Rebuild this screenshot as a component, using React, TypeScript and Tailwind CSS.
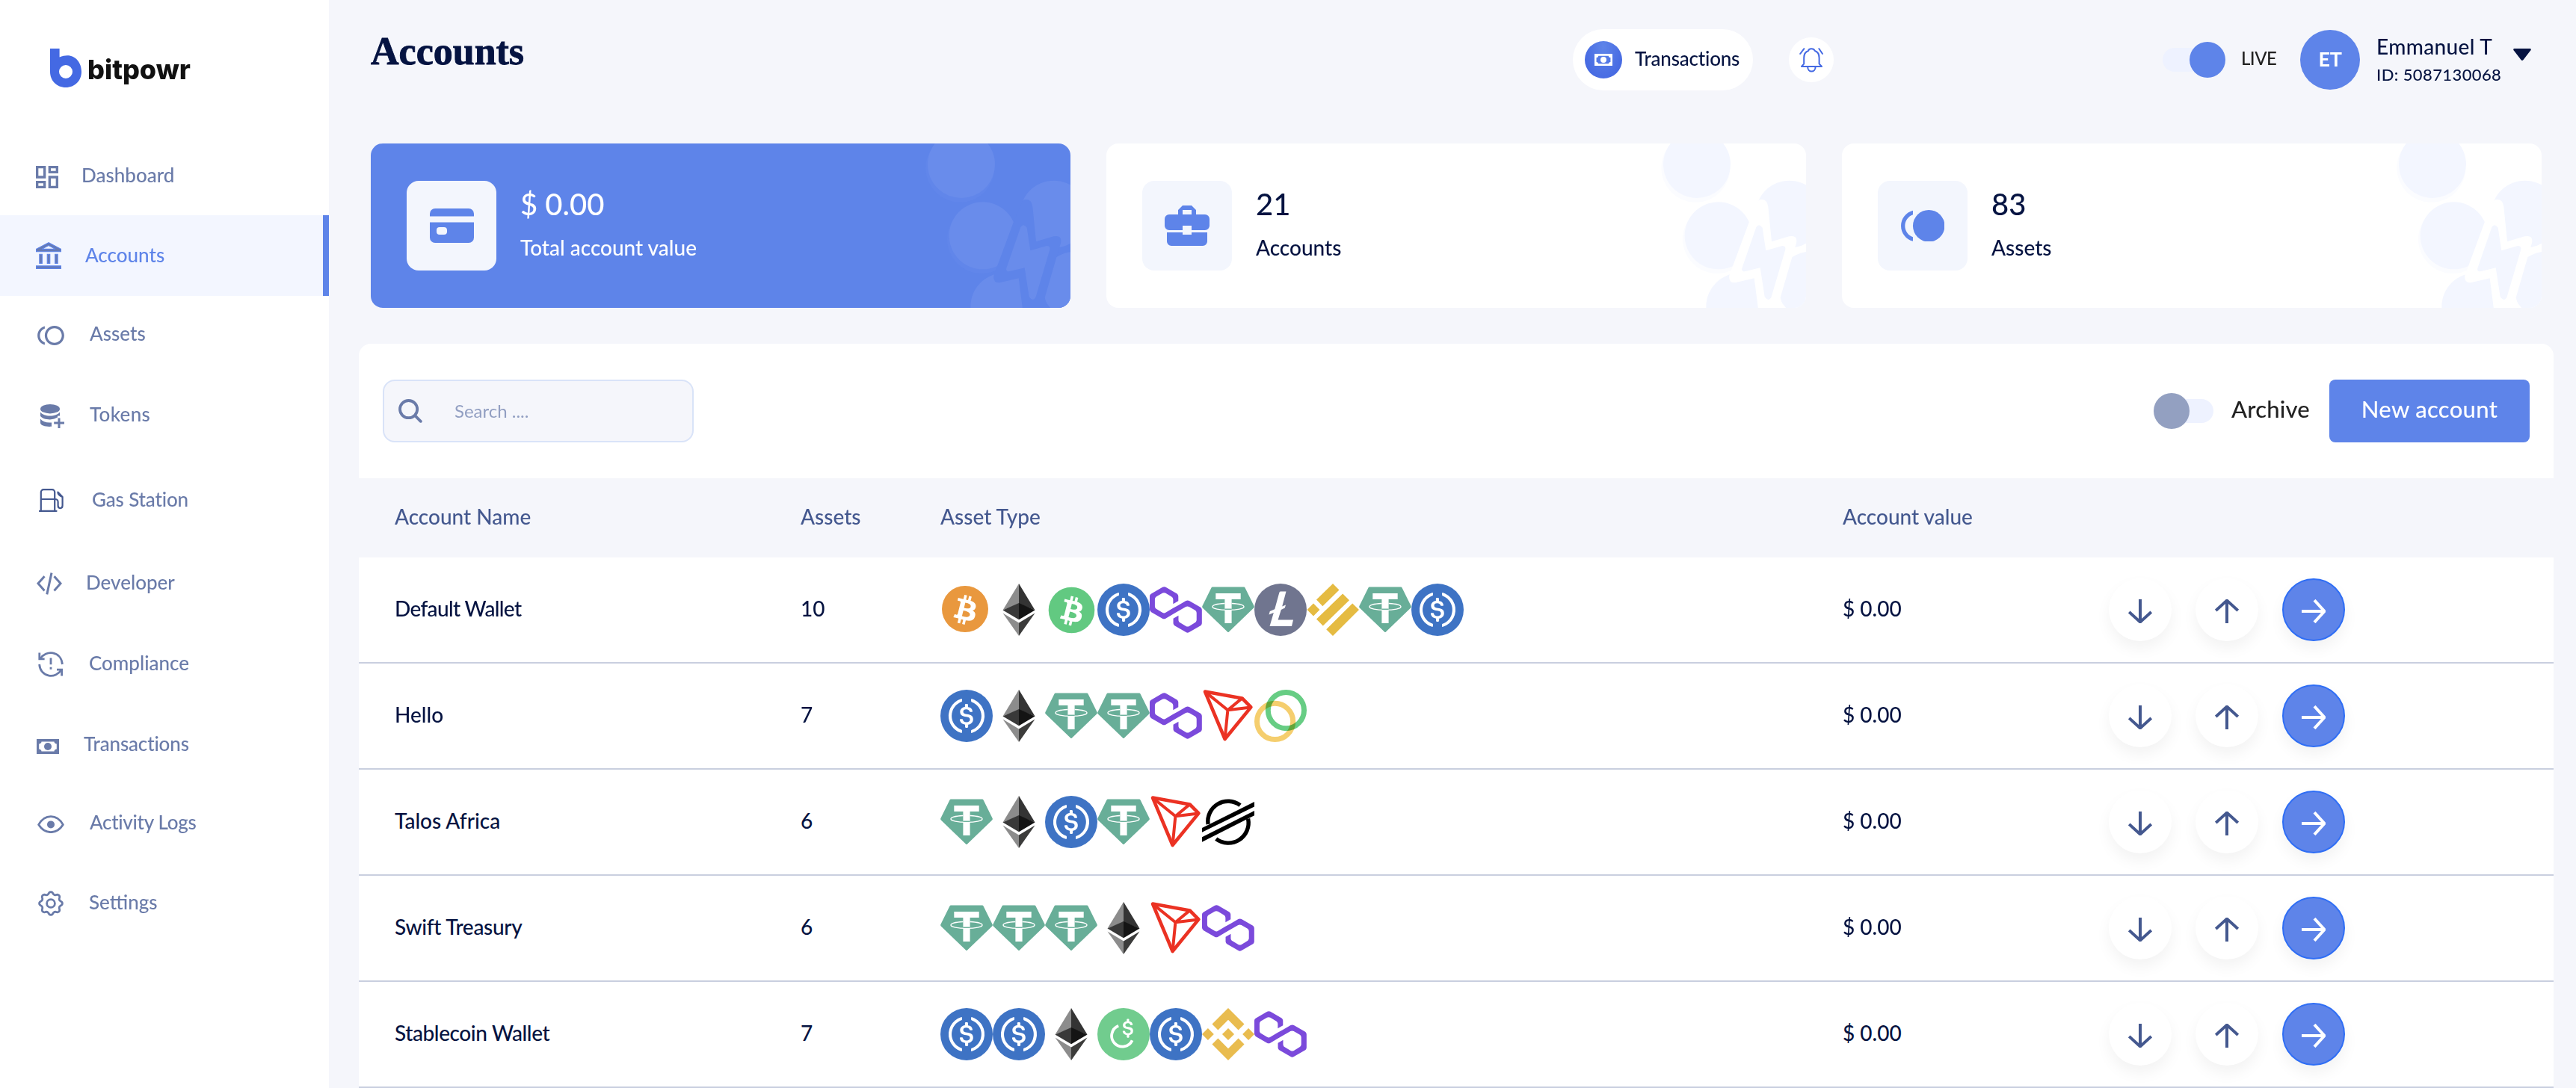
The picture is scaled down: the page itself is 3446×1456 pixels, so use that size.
import React from 'react';

/* ---------- sidebar icons ---------- */

const DashboardIcon = () => (
  <svg viewBox="3 3 18 18" className="h-[30px] w-[30px] fill-[#6a7ba9]">
    <path d="M19 5v2h-4V5h4M9 5v6H5V5h4m10 8v6h-4v-6h4M9 17v2H5v-2h4M21 3h-8v6h8V3zM11 3H3v10h8V3zm10 8h-8v10h8V11zm-10 4H3v6h8v-6z" />
  </svg>
);

const BankIcon = () => (
  <svg viewBox="1.7 .7 19.6 20.6" className="h-9 w-[34px] fill-[#667ab4] stroke-[#5e84e9] stroke-[.65]">
    <path d="M6.5 10h-2v7h2v-7zm6 0h-2v7h2v-7zm8.5 9H2v2h19v-2zm-2.5-9h-2v7h2v-7zm-7-6.74L16.71 6H6.29l5.21-2.74m0-2.26L2 6v2h19V6l-9.5-5z" />
  </svg>
);

const TollIcon = () => (
  <svg viewBox="1 4 22 16" className="h-[26px] w-9 fill-[#6a7ba9]">
    <path d="M15 4c-4.42 0-8 3.58-8 8s3.58 8 8 8 8-3.58 8-8-3.58-8-8-8zm0 14c-3.31 0-6-2.69-6-6s2.69-6 6-6 6 2.69 6 6-2.69 6-6 6zM3 12c0-2.61 1.67-4.83 4-5.65V4.26C3.55 5.15 1 8.27 1 12s2.55 6.85 6 7.74v-2.09c-2.33-.82-4-3.04-4-5.65z" />
  </svg>
);

const TokensIcon = () => (
  <svg viewBox="0 0 32 32" className="h-8 w-8 fill-[#6a7ba9]">
    <ellipse cx="13" cy="6.2" rx="13" ry="6.2" />
    <path d="M0 10.5C2.5 14 7.5 15.5 13 15.5S23.5 14 26 10.5V15.5H23V17.5L18.5 19.6C13 21.5 2 20 0 15.5Z" />
    <path d="M0 19.5C3 23.5 8 25 15 24.5V29.8C8 30.5 0 28.5 0 25Z" />
    <path d="M25 18.5V32M18.2 25H32" className="fill-none stroke-[#6a7ba9] stroke-[3]" />
  </svg>
);

const GasIcon = () => (
  <svg viewBox="0 0 33 31" className="h-[31px] w-[33px] fill-none stroke-[#44588f] stroke-[2.2]" strokeLinejoin="round" strokeLinecap="round">
    <path d="M2.8 30V4.6A3.4 3.4 0 0 1 6.2 1.2H17.8A3.4 3.4 0 0 1 21.2 4.6V30M1 29.9H23.5M2.8 14H21.2" />
    <path d="M21.2 14C25 14 25.6 15.5 25.6 18V22.5C25.6 27.2 31.6 27.2 31.6 22.5V11L25.4 4.6C25.4 8 27.5 9.5 31.4 11" />
  </svg>
);

const CodeIcon = () => (
  <svg viewBox="0 0 34 30" className="h-[30px] w-[34px] fill-none stroke-[#6a7ba9] stroke-[3]">
    <path d="M10.5 5.2L2 14.8L10.5 24.4M23.5 5.2L32 14.8L23.5 24.4M20 .6L13.8 29.4" />
  </svg>
);

const ComplianceIcon = () => (
  <svg viewBox="0 0 34 34" className="h-[34px] w-[34px] fill-none stroke-[#6a7ba9] stroke-[2.8]">
    <path d="M3.2 9.4C10 -2.2 30.5 -1.5 32.4 17M30.8 24.6C24 36.2 3.5 35.5 1.6 17" />
    <path d="M1.8 1.6V9.9H8.6M25 24.2H31.6V32.4M17 8.4V17.2M17 20.8V23.8" />
  </svg>
);

const MoneyGlyph = ({ className }: { className: string }) => (
  <svg viewBox="0 0 30 20" className={className}>
    <path fillRule="evenodd" d="M0 0H30V20H0ZM6.5 3.4C6.5 5.2 5 6.2 3.2 6.4V13.6C5 13.8 6.5 14.8 6.5 16.6H23.5C23.5 14.8 25 13.8 26.8 13.6V6.4C25 6.2 23.5 5.2 23.5 3.4Z" />
    <circle cx="15" cy="10" r="5" />
  </svg>
);

const MoneyIcon = () => <MoneyGlyph className="h-5 w-[30px] fill-[#6a7ba9]" />;

const EyeIcon = () => (
  <svg viewBox="0 0 36 24" className="h-6 w-9 fill-none stroke-[#6a7ba9] stroke-[2.8]" strokeLinejoin="round">
    <path d="M1.6 12.6C10 -2 26 -2 34.4 12.6C26 26 10 26 1.6 12.6Z" />
    <circle cx="18" cy="12.4" r="5" className="fill-[#6a7ba9] stroke-none" />
  </svg>
);

const gearPath =
  'M' +
  Array.from({ length: 96 }, (_, i) => {
    const a = (i / 96) * Math.PI * 2;
    const c = Math.cos(a * 8);
    const r = 13.9 + 1.5 * Math.sign(c) * Math.pow(Math.abs(c), 0.7);
    return (17 + r * Math.sin(a)).toFixed(2) + ' ' + (17 - r * Math.cos(a)).toFixed(2);
  }).join('L') +
  'Z';

const GearIcon = () => (
  <svg viewBox="0 0 34 34" className="h-[34px] w-[34px] fill-none stroke-[#6a7ba9] stroke-[2.8]" strokeLinejoin="round">
    <path d={gearPath} />
    <circle cx="17" cy="17" r="5.4" />
  </svg>
);

/* ---------- coins ---------- */

const B_GLYPH =
  'M23.189 14.02c.314-2.096-1.283-3.223-3.465-3.975l.708-2.84-1.728-.43-.69 2.765c-.454-.114-.92-.22-1.385-.326l.695-2.783L15.596 6l-.708 2.839c-.376-.086-.746-.17-1.104-.26l.002-.009-2.384-.595-.46 1.846s1.283.294 1.256.312c.7.175.826.638.805 1.006l-.806 3.235c.048.012.11.03.18.057l-.183-.045-1.13 4.532c-.086.212-.303.531-.793.41.018.025-1.256-.313-1.256-.313l-.858 1.978 2.25.561c.418.105.828.215 1.231.318l-.715 2.872 1.727.43.708-2.84c.472.127.93.245 1.378.357l-.706 2.828 1.728.43.715-2.866c2.948.558 5.164.333 6.097-2.333.752-2.146-.037-3.385-1.588-4.192 1.13-.26 1.98-1.003 2.207-2.538zm-3.95 5.538c-.533 2.147-4.148.986-5.32.695l.95-3.805c1.172.293 4.929.872 4.37 3.11zm.535-5.569c-.487 1.953-3.495.96-4.47.717l.86-3.45c.975.243 4.118.696 3.61 2.733z';
const DOLLAR_GLYPH =
  'M20.022 18.124c0-2.124-1.28-2.852-3.84-3.156-1.828-.243-2.193-.728-2.193-1.578 0-.85.61-1.396 1.828-1.396 1.097 0 1.707.364 2.011 1.275a.458.458 0 00.427.303h.975a.416.416 0 00.427-.425v-.06a3.04 3.04 0 00-2.743-2.489V9.142c0-.243-.183-.425-.487-.486h-.915c-.243 0-.426.182-.487.486v1.396c-1.829.242-2.986 1.456-2.986 2.974 0 2.002 1.218 2.791 3.778 3.095 1.707.303 2.255.668 2.255 1.639 0 .97-.853 1.638-2.011 1.638-1.585 0-2.133-.667-2.316-1.578-.06-.242-.244-.364-.427-.364h-1.036a.416.416 0 00-.426.425v.06c.243 1.518 1.219 2.61 3.23 2.914v1.457c0 .242.183.425.487.485h.915c.243 0 .426-.182.487-.485V21.34c1.829-.303 3.047-1.578 3.047-3.217z';

const coins: Record<string, React.ReactNode> = {
  btc: (
    <>
      <circle cx="33" cy="34" r="31" fill="#e9983e" />
      <path d={B_GLYPH} fill="#fff" transform="translate(1 3) scale(2)" />
    </>
  ),
  bch: (
    <>
      <circle cx="35.5" cy="35.5" r="30.8" fill="#62c981" />
      <path d={B_GLYPH} fill="#fff" transform="translate(3.5 4.5) scale(2)" />
    </>
  ),
  eth: (
    <>
      <path d="M35 0L13.5 35.5L35 27Z" fill="#8c8c8c" />
      <path d="M35 0L56.5 35.5L35 27Z" fill="#343434" />
      <path d="M35 26L13.5 35.5L35 48.3Z" fill="#393939" />
      <path d="M35 26L56.5 35.5L35 48.3Z" fill="#141414" />
      <path d="M13.5 39.6L35 52.4V70Z" fill="#8c8c8c" />
      <path d="M56.5 39.6L35 52.4V70Z" fill="#3c3c3b" />
    </>
  ),
  usdc: (
    <>
      <circle cx="35" cy="35" r="35" fill="#3e73c4" />
      <g fill="#fff" transform="scale(2.1875)">
        <path d={DOLLAR_GLYPH} />
        <path d="M12.892 24.497c-4.754-1.7-7.192-6.98-5.424-11.653.914-2.55 2.925-4.491 5.424-5.402.244-.121.365-.303.365-.607v-.85c0-.242-.121-.424-.365-.485-.061 0-.183 0-.244.06a10.895 10.895 0 00-7.13 13.717c1.096 3.4 3.717 6.01 7.13 7.102.244.121.488 0 .548-.243.061-.06.061-.122.061-.243v-.85c0-.182-.182-.424-.365-.546zm6.46-18.936c-.244-.122-.488 0-.548.242-.061.061-.061.122-.061.243v.85c0 .243.182.485.365.607 4.754 1.7 7.192 6.98 5.424 11.653-.914 2.55-2.925 4.491-5.424 5.402-.244.121-.365.303-.365.607v.85c0 .242.121.424.365.485.061 0 .183 0 .244-.06a10.895 10.895 0 007.13-13.717c-1.096-3.46-3.778-6.07-7.13-7.162z" />
      </g>
    </>
  ),
  matic: (
    <path
      fill="#7b4adb"
      transform="translate(0 4.4) scale(1.823)"
      d="M29,10.2c-0.7-0.4-1.6-0.4-2.4,0L21,13.5l-3.8,2.1l-5.5,3.3c-0.7,0.4-1.6,0.4-2.4,0L5,16.3c-0.7-0.4-1.2-1.2-1.2-2.1v-5c0-0.8,0.4-1.6,1.2-2.1l4.3-2.5c0.7-0.4,1.6-0.4,2.4,0L16,7.2c0.7,0.4,1.2,1.2,1.2,2.1v3.3l3.8-2.2V7c0-0.8-0.4-1.6-1.2-2.1l-8-4.7c-0.7-0.4-1.6-0.4-2.4,0L1.2,5C0.4,5.4,0,6.2,0,7v9.4c0,0.8,0.4,1.6,1.2,2.1l8.1,4.7c0.7,0.4,1.6,0.4,2.4,0l5.5-3.2l3.8-2.2l5.5-3.2c0.7-0.4,1.6-0.4,2.4,0l4.3,2.5c0.7,0.4,1.2,1.2,1.2,2.1v5c0,0.8-0.4,1.6-1.2,2.1L29,28.8c-0.7,0.4-1.6,0.4-2.4,0l-4.3-2.5c-0.7-0.4-1.2-1.2-1.2-2.1V21l-3.8,2.2v3.3c0,0.8,0.4,1.6,1.2,2.1l8.1,4.7c0.7,0.4,1.6,0.4,2.4,0l8.1-4.7c0.7-0.4,1.2-1.2,1.2-2.1V17c0-0.8-0.4-1.6-1.2-2.1L29,10.2z"
    />
  ),
  usdt: (
    <>
      <path d="M14 4.4H56Q57 4.4 57.5 5.4L69.6 30Q70.2 31.4 69.2 32.4L36 64.6Q35 65.6 34 64.6L.8 32.4Q-.2 31.4 .4 30L12.5 5.4Q13 4.4 14 4.4Z" fill="#68ae98" />
      <path d="M18.3 13H51.7V21H39.6V53H30.4V21H18.3Z" fill="#fff" />
      <path d="M30.4 34.6H39.6" stroke="#68ae98" strokeWidth="1.4" />
      <path d="M30.4 26.5C20 27 14 29 14 31C14 33.4 23 35.4 35 35.4S56 33.4 56 31C56 29 50 27 39.6 26.5" fill="none" stroke="#fff" strokeWidth="1.4" />
      <path d="M30.4 34.2H39.6" stroke="#68ae98" strokeWidth="1.2" />
    </>
  ),
  ltc: (
    <>
      <circle cx="35" cy="35" r="35" fill="#70758f" />
      <path d="M35 10.5H42.5L37.2 30.6L42 28.5L40.8 32.6L35.8 34.9L31.6 48.6H52L50 57H20.5L25.8 39L19.5 41.6L20.8 37L27.2 34.2L33.2 12.4Q33.6 10.5 35 10.5Z" fill="#fff" />
    </>
  ),
  busd: (
    <path fill="#e5bb42" d="M35 0L43.5 8.5L21.3 30.2L13 21.6ZM48.2 13.4L57 22.2L21.8 56.4L13 47.6ZM9 26.6L17.4 35L9 43.4L.6 35ZM61.2 26.4L70 35L35 70L26.2 61.2Z" />
  ),
  trx: (
    <g fill="none" stroke="#eb3223" strokeWidth="4.6" strokeLinejoin="round">
      <path d="M4 2.6L53.6 11.4L65.4 23.4L30.6 66Z" />
      <path d="M4 2.6L34.4 27.2L30.6 66M34.4 27.2L53.6 11.4M34.4 27.2L65.4 23.4" strokeWidth="4" />
    </g>
  ),
  celo: (
    <g fill="none" strokeWidth="7">
      <circle cx="27.6" cy="42.4" r="24.1" stroke="#f5ce6e" />
      <circle cx="42.4" cy="27.6" r="24.1" stroke="#67cd84" className="mix-blend-multiply" />
    </g>
  ),
  xlm: (
    <>
      <path d="M0 43L70 8V14.4L0 48.8ZM0 55.2L70 20V26.2L0 61.8Z" />
      <path d="M51 12.6A27 27 0 0 0 8.1 38M18.8 57.6A27 27 0 0 0 61.6 30.6" fill="none" stroke="#000" strokeWidth="5.4" />
    </>
  ),
  cusd: (
    <>
      <circle cx="35" cy="35" r="35" fill="#71cc8e" />
      <path d="M28.2 23.8A14.4 14.4 0 1 0 46.6 43.2" fill="none" stroke="#fff" strokeWidth="3.8" />
      <path d={DOLLAR_GLYPH} fill="#fff" transform="translate(13.4 -.4) scale(1.72)" />
    </>
  ),
  bnb: (
    <path
      fill="#e9bc4f"
      transform="scale(3.5) translate(-6 -6)"
      d="M12.116 14.404L16 10.52l3.886 3.886 2.26-2.26L16 6l-6.144 6.144 2.26 2.26zM6 16l2.26-2.26L10.52 16l-2.26 2.26L6 16zm6.116 1.596L16 21.48l3.886-3.886 2.26 2.259L16 26l-6.144-6.144-.003-.003 2.263-2.257zM21.48 16l2.26-2.26L26 16l-2.26 2.26L21.48 16zm-3.188-.002h.002V16L16 18.294l-2.291-2.29-.004-.004.004-.003.401-.402.195-.195L16 13.706l2.293 2.293z"
    />
  ),
};

const Coin = ({ id }: { id: string }) => (
  <svg viewBox="0 0 70 70" className="h-[70px] w-[70px] shrink-0">
    {coins[id]}
  </svg>
);

/* ---------- data ---------- */

const nav = [
  { label: 'Dashboard', Icon: DashboardIcon, row: 'h-[102px] pl-12', text: 'ml-[31px] pb-[6px]' },
  { label: 'Accounts', Icon: BankIcon, row: 'h-[108px] pl-12 bg-[#f3f6ff] border-r-8 border-[#5e84e9] text-[#5e84e9]', text: 'ml-8 pb-[3px]' },
  { label: 'Assets', Icon: TollIcon, row: 'h-[106px] pl-[50px]', text: 'ml-[34px] pb-[6px]' },
  { label: 'Tokens', Icon: TokensIcon, row: 'h-[110px] pl-[54px]', text: 'ml-[34px] pb-[6px] tracking-[.3px]' },
  { label: 'Gas Station', Icon: GasIcon, row: 'h-[115px] pl-[52px]', text: 'ml-[38px] pb-[3px] -tracking-[.15px]' },
  { label: 'Developer', Icon: CodeIcon, row: 'h-[108px] pl-[49px]', text: 'ml-[32px] pb-1' },
  { label: 'Compliance', Icon: ComplianceIcon, row: 'h-[107px] pl-[51px]', text: 'ml-[34px] pb-[3px]' },
  { label: 'Transactions', Icon: MoneyIcon, row: 'h-[114px] pl-[49px]', text: 'ml-[33px] pb-2 -tracking-[.15px]' },
  { label: 'Activity Logs', Icon: EyeIcon, row: 'h-[94px] pl-[50px]', text: 'ml-[34px] pb-[7px] -tracking-[.3px]' },
  { label: 'Settings', Icon: GearIcon, row: 'h-[118px] pl-[51px]', text: 'ml-[34px] pb-1' },
];

const rows = [
  { name: 'Default Wallet', count: '10', coins: ['btc', 'eth', 'bch', 'usdc', 'matic', 'usdt', 'ltc', 'busd', 'usdt', 'usdc'], text: '-tracking-[.65px]' },
  { name: 'Hello', count: '7', coins: ['usdc', 'eth', 'usdt', 'usdt', 'matic', 'trx', 'celo'], text: '' },
  { name: 'Talos Africa', count: '6', coins: ['usdt', 'eth', 'usdc', 'usdt', 'trx', 'xlm'], text: '' },
  { name: 'Swift Treasury', count: '6', coins: ['usdt', 'usdt', 'usdt', 'eth', 'trx', 'matic'], text: '-tracking-[.3px]' },
  { name: 'Stablecoin Wallet', count: '7', coins: ['usdc', 'usdc', 'eth', 'cusd', 'usdc', 'bnb', 'matic'], text: '-tracking-[.4px]' },
];

/* ---------- cards ---------- */

const Pattern = ({ bg, shape, shade }: { bg: string; shape: string; shade: string }) => (
  <svg viewBox="0 36 636 660" className="absolute top-0 right-0 h-[220px] w-[212px]">
    <g className={shade}>
      <circle cx="193" cy="134" r="138" />
      <circle cx="279" cy="420" r="138" />
    </g>
    <g className={shape}>
      <circle cx="198" cy="120" r="135" />
      <circle cx="284" cy="406" r="135" />
      <circle cx="370" cy="691" r="135" />
      <circle cx="569" cy="320" r="135" />
      <circle cx="655" cy="605" r="135" />
    </g>
    <path className={bg} d="M450 262Q480 256 484 290L498 430L568 409Q604 402 597 436L580 493L533 655L545 700H444L428 577L352 595Q324 596 328 566L408 350L440 275Q444 264 450 262Z" />
    <path className={shape} d="M436 372Q448 354 461 374L475 466L540 447Q556 447 553 462L496 655Q484 672 470 652L452 535L390 550Q376 550 379 536Z" />
  </svg>
);

const Card = ({
  primary,
  icon,
  value,
  label,
}: {
  primary?: boolean;
  icon: React.ReactNode;
  value: string;
  label: string;
}) => (
  <div
    className={
      primary
        ? 'relative flex h-[220px] flex-1 items-center overflow-hidden rounded-2xl bg-[#5e84e9] pl-12 text-white'
        : 'relative flex h-[220px] flex-1 items-center overflow-hidden rounded-2xl bg-white pl-12 text-[#051341]'
    }
  >
    <Pattern
      bg={primary ? 'fill-[#5e84e9]' : 'fill-white'}
      shape={primary ? 'fill-[#698ceb]' : 'fill-[#f3f6ff]'}
      shade={primary ? 'fill-[#6186ea]' : 'fill-[#fbfcff]'}
    />
    <div className="flex h-[120px] w-[120px] items-center justify-center rounded-2xl bg-[#f3f6fd]">{icon}</div>
    <div className="ml-8 flex flex-col">
      <span className="text-[40px] leading-[56px]">{value}</span>
      <span className="mt-1 pb-[2px] text-[28px] leading-[52px]">{label}</span>
    </div>
  </div>
);

const CreditCardIcon = () => (
  <svg viewBox="0 0 59 46" className="h-[46px] w-[59px] fill-[#5e84e9]">
    <path d="M0 10.5V7A7 7 0 0 1 7 0H52A7 7 0 0 1 59 7V10.5Z" />
    <path fillRule="evenodd" d="M0 18.5H59V39A7 7 0 0 1 52 46H7A7 7 0 0 1 0 39ZM13 25A4 4 0 0 0 9 29V31A4 4 0 0 0 13 35H19A4 4 0 0 0 23 31V29A4 4 0 0 0 19 25Z" />
  </svg>
);

const BriefcaseIcon = () => (
  <svg viewBox="0 0 60 54" className="h-[54px] w-[60px] fill-[#5e84e9]">
    <path fillRule="evenodd" d="M18 12V6L24 0H36L42 6V12H54A6 6 0 0 1 60 18V27A6 6 0 0 1 54 33H36V27H24V33H6A6 6 0 0 1 0 27V18A6 6 0 0 1 6 12ZM24 6V12H36V6Z" />
    <path d="M3 36H24V39H36V36H57V48A6 6 0 0 1 51 54H9A6 6 0 0 1 3 48Z" />
  </svg>
);

const TollFilledIcon = () => (
  <svg viewBox="1 4 22 16" className="h-[42.5px] w-[58.5px] fill-[#5e84e9]">
    <circle cx="15" cy="12" r="8" />
    <path d="M3 12c0-2.61 1.67-4.83 4-5.65V4.26C3.55 5.15 1 8.27 1 12s2.55 6.85 6 7.74v-2.09c-2.33-.82-4-3.04-4-5.65z" />
  </svg>
);

/* ---------- row actions ---------- */

const Arrow = ({ className }: { className: string }) => (
  <svg viewBox="0 0 32 32" className={className}>
    <path d="M0 16H30M17 1.2L30.4 16L17 30.8" fill="none" strokeWidth="4" />
  </svg>
);

const Actions = () => (
  <div className="flex items-center gap-8">
    <div className="flex h-21 w-21 items-center justify-center rounded-full bg-white pt-1 shadow-[0_10px_20px_rgba(0,0,0,0.05)]">
      <Arrow className="h-8 w-8 rotate-90 stroke-[#44588f]" />
    </div>
    <div className="flex h-21 w-21 items-center justify-center rounded-full bg-white pt-1 shadow-[0_10px_20px_rgba(0,0,0,0.05)]">
      <Arrow className="h-8 w-8 -rotate-90 stroke-[#44588f]" />
    </div>
    <div className="flex h-21 w-21 items-center justify-center rounded-full border-2 border-[#2f6ef5] bg-[#5e84e9] pt-1 shadow-[0_10px_20px_rgba(0,0,0,0.05)]">
      <Arrow className="h-8 w-8 stroke-white" />
    </div>
  </div>
);

/* ---------- page ---------- */

const Sidebar = () => (
  <aside className="flex h-full w-[440px] shrink-0 flex-col bg-white">
    <div className="flex h-[186px] items-start pt-[65px] pl-[67px]">
      <svg viewBox="0 0 42 52" className="h-[52px] w-[42px] fill-[#4469e3]">
        <path fillRule="evenodd" d="M0 0H12.6V11.6C30 4 42 16 42 31C42 43 33 52 21 52S0 43 0 31ZM21 22A9 9 0 0 0 21 40A9 9 0 0 0 21 22Z" />
      </svg>
      <span className="ml-2 pt-[7px] font-[Inter] text-[36px] leading-[42px] font-extrabold text-[#111111]">bitpowr</span>
    </div>
    <nav className="flex flex-col text-[26px] leading-8 text-[#6a7ba9]">
      {nav.map(({ label, Icon, row, text }) => (
        <div key={label} className={`flex items-center ${row}`}>
          <Icon />
          <span className={text}>{label}</span>
        </div>
      ))}
    </nav>
  </aside>
);

const Header = () => (
  <header className="flex h-40 items-center pr-[60px] pl-14">
    <h1 className="w-[1608px] pb-[22px] font-['Liberation_Serif'] text-[52px] leading-[60px] font-bold text-[#051341] [-webkit-text-stroke:0.9px_#051341]">
      Accounts
    </h1>
    <div className="flex h-[82px] w-[241px] items-center rounded-full bg-white pl-4">
      <div className="flex h-[50px] w-[50px] items-center justify-center rounded-full bg-radial-[at_50%_15%] from-[#5e84e9] to-[#3f62e0]">
        <MoneyGlyph className="h-4 w-6 fill-white" />
      </div>
      <span className="ml-[17px] pb-1 text-[26px] leading-8 -tracking-[.2px] text-[#051341]">Transactions</span>
    </div>
    <div className="ml-12 flex h-15 w-15 items-center justify-center rounded-full bg-white">
      <svg viewBox="0 0 32 33" className="h-[33px] w-8 fill-none stroke-[#4469e3] stroke-2" strokeLinecap="round" strokeLinejoin="round">
        <path d="M3 25L6.2 21.4V13.5C6.2 8.2 8.4 5.2 12 4C12.6 .4 19.4 .4 20.8 4C24.4 5.2 26.6 8.2 26.6 13.5V21.4L30 25Z" />
        <path d="M11.2 25.4C11.2 33.6 21.6 33.6 21.6 25.4M1.2 8L6.4 1.2M26.4 1.2L31 8" />
      </svg>
    </div>
    <div className="ml-auto flex items-center">
      <div className="flex h-8 w-21 items-center justify-end rounded-2xl bg-[#eef2ff]">
        <div className="h-12 w-12 shrink-0 rounded-full bg-[#5e84e9]" />
      </div>
      <span className="ml-[21px] w-[79px] pb-1 text-[24px] leading-8 -tracking-[.5px] text-[#222222]">LIVE</span>
      <div className="flex h-20 w-20 items-center justify-center rounded-full bg-[#5e84e9] pb-[2px] text-[27px] font-bold -tracking-[.3px] text-white">ET</div>
      <div className="ml-[22px] flex w-[183px] flex-col text-[#051341]">
        <span className="text-[28px] leading-[36px] tracking-[.35px]">Emmanuel T</span>
        <span className="mt-1 text-[22px] leading-[32px] tracking-[.4px]">ID: 5087130068</span>
      </div>
      <svg viewBox="0 0 24 16" className="mb-[14px] h-4 w-6 fill-[#051341]">
        <path d="M1.4 0H22.6Q24.6 .4 23.4 2.2L13.4 15.2Q12 16.6 10.6 15.2L.6 2.2Q-.6 .4 1.4 0Z" />
      </svg>
    </div>
  </header>
);

export default function App() {
  return (
    <div className="flex h-[1456px] w-[3446px] overflow-hidden bg-[#f5f6fb] font-[Lato,sans-serif] font-medium">
      <Sidebar />
      <main className="flex min-w-0 flex-1 flex-col">
        <Header />
        <section className="mt-8 mr-[46px] ml-14 flex gap-12">
          <Card primary icon={<CreditCardIcon />} value="$ 0.00" label="Total account value" />
          <Card icon={<BriefcaseIcon />} value="21" label="Accounts" />
          <Card icon={<TollFilledIcon />} value="83" label="Assets" />
        </section>
        <section className="mt-12 mr-[30px] ml-10 flex flex-col">
          <div className="flex h-[180px] items-center rounded-t-2xl bg-white px-8">
            <div className="flex h-21 w-[416px] items-center rounded-2xl border-2 border-[#d9e3f8] bg-[#f5f6fb] pl-[19px]">
              <svg viewBox="0 0 32 32" className="h-8 w-8 fill-none stroke-[#6a7ba9] stroke-[3.8]" strokeLinecap="round">
                <circle cx="13.6" cy="13.6" r="11.6" />
                <path d="M22.4 22.4L29.8 29.8" />
              </svg>
              <span className="ml-[43px] text-[24px] leading-8 font-normal text-[#929fc2]">Search ....</span>
            </div>
            <div className="ml-auto flex items-center">
              <div className="flex h-8 w-20 items-center rounded-2xl bg-[#eef2ff]">
                <div className="h-12 w-12 shrink-0 rounded-full bg-[#93a0c1]" />
              </div>
              <span className="ml-6 pb-[6px] text-[31px] leading-9 tracking-[.2px] text-[#222222]">Archive</span>
              <button className="ml-[26px] h-21 w-[268px] rounded-lg bg-[#5e84e9] pb-[6px] text-[31px] font-medium tracking-[.3px] text-white">New account</button>
            </div>
          </div>
          <div className="grid h-[106px] grid-cols-[543px_187px_1207px_1fr] items-center pb-1 pl-12 text-[28px] text-[#44588f]">
            <span>Account Name</span>
            <span>Assets</span>
            <span>Asset Type</span>
            <span>Account value</span>
          </div>
          {rows.map((row) => (
            <div key={row.name} className="grid h-[142px] grid-cols-[543px_187px_1207px_356px_1fr] items-center border-b-2 border-[#c9cfdf] bg-white pl-12 text-[28px] text-[#051341]">
              <span className={`pb-1 ${row.text}`}>{row.name}</span>
              <span className="pb-1">{row.count}</span>
              <div className="flex">
                {row.coins.map((c, i) => (
                  <Coin key={i} id={c} />
                ))}
              </div>
              <span className="pb-1">{row.value ?? '$ 0.00'}</span>
              <Actions />
            </div>
          ))}
        </section>
      </main>
    </div>
  );
}
